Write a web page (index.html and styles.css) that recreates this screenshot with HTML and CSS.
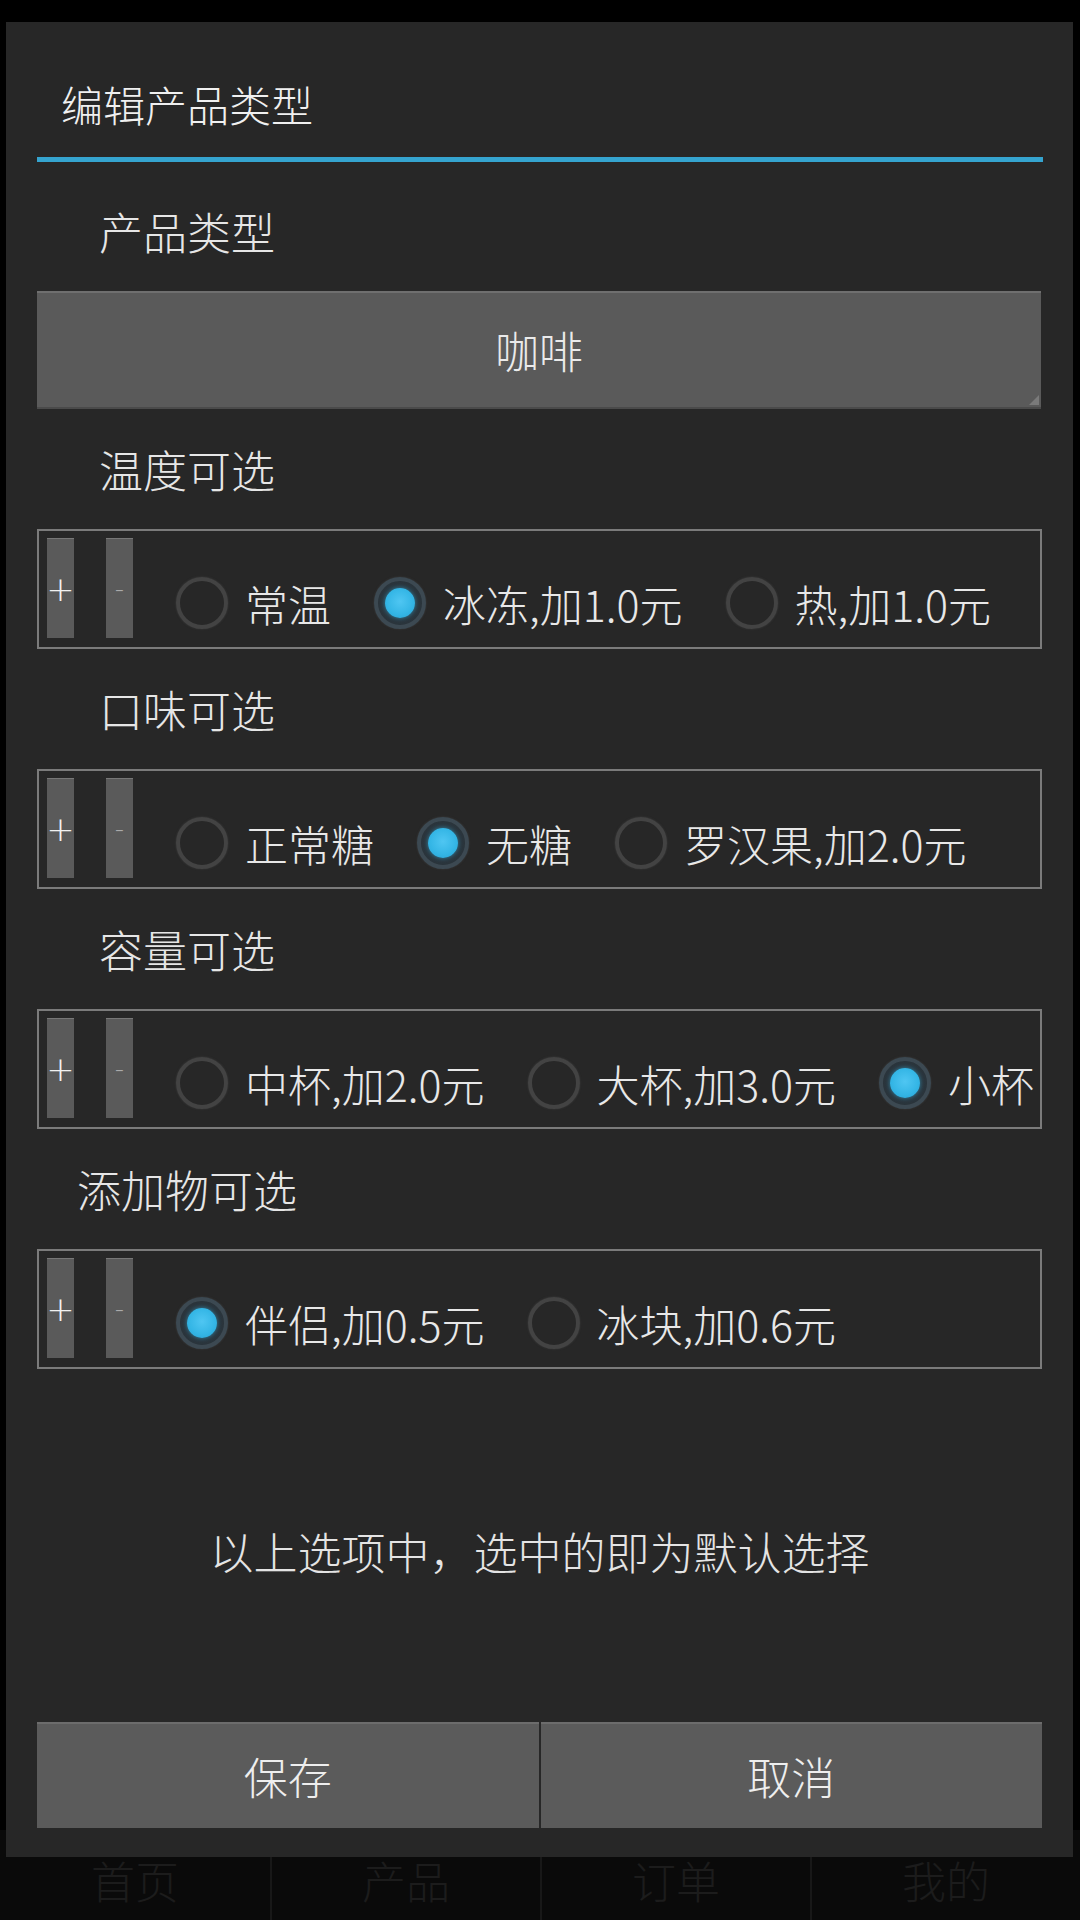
FILE: index.html
```html
<!DOCTYPE html>
<html lang="zh-CN">
<head>
<meta charset="utf-8">
<title>编辑产品类型</title>
<link rel="stylesheet" href="styles.css">
</head>
<body>
<div class="app">
  <div class="app-main"></div>
  <nav class="tabbar">
    <div class="tab">首页</div>
    <div class="tab">产品</div>
    <div class="tab">订单</div>
    <div class="tab">我的</div>
  </nav>
</div>

<div class="dialog">
  <div class="dialog-title">编辑产品类型</div>
  <div class="title-line"></div>

  <div class="dialog-body">
    <div class="label">产品类型</div>
    <div class="spinner"><span>咖啡</span><span class="spinner-corner"></span></div>

    <div class="label">温度可选</div>
    <div class="optbox">
      <div class="step">+</div>
      <div class="step step-minus">-</div>
      <div class="radios">
        <div class="radio"><span class="dot"></span><span class="rtext">常温</span></div>
        <div class="radio checked"><span class="dot"></span><span class="rtext">冰冻,加1.0元</span></div>
        <div class="radio"><span class="dot"></span><span class="rtext">热,加1.0元</span></div>
      </div>
    </div>

    <div class="label">口味可选</div>
    <div class="optbox">
      <div class="step">+</div>
      <div class="step step-minus">-</div>
      <div class="radios">
        <div class="radio"><span class="dot"></span><span class="rtext">正常糖</span></div>
        <div class="radio checked"><span class="dot"></span><span class="rtext">无糖</span></div>
        <div class="radio"><span class="dot"></span><span class="rtext">罗汉果,加2.0元</span></div>
      </div>
    </div>

    <div class="label">容量可选</div>
    <div class="optbox">
      <div class="step">+</div>
      <div class="step step-minus">-</div>
      <div class="radios">
        <div class="radio"><span class="dot"></span><span class="rtext">中杯,加2.0元</span></div>
        <div class="radio"><span class="dot"></span><span class="rtext">大杯,加3.0元</span></div>
        <div class="radio checked"><span class="dot"></span><span class="rtext">小杯</span></div>
      </div>
    </div>

    <div class="label">添加物可选</div>
    <div class="optbox">
      <div class="step">+</div>
      <div class="step step-minus">-</div>
      <div class="radios">
        <div class="radio checked"><span class="dot"></span><span class="rtext">伴侣,加0.5元</span></div>
        <div class="radio"><span class="dot"></span><span class="rtext">冰块,加0.6元</span></div>
      </div>
    </div>

    <div class="notice">以上选项中，选中的即为默认选择</div>
  </div>

  <div class="actions">
    <div class="btn">保存</div>
    <div class="btn">取消</div>
  </div>
</div>
</body>
</html>
```

FILE: styles.css
```css
* { box-sizing: border-box; }

html, body {
  margin: 0;
  padding: 0;
}

body {
  width: 1080px;
  height: 1920px;
  position: relative;
  overflow: hidden;
  background: #000;
  font-family: "Noto Sans CJK SC", "Noto Sans", sans-serif;
  font-weight: 300;
  color: #e8e8e8;
}

/* underlying app (dimmed) */
.app {
  height: 1920px;
  display: flex;
  flex-direction: column;
}

.app-main {
  flex: 1;
  background: #000;
}

.tabbar {
  height: 90px;
  background: #0a0a0a;
  display: grid;
  grid-template-columns: repeat(4, 1fr);
}

.tab {
  display: flex;
  align-items: center;
  justify-content: center;
  padding-top: 10px;
  font-size: 44px;
  font-weight: 200;
  color: #1c1c1c;
  border-left: 2px solid #181818;
}

.tab:first-child { border-left: none; }

/* dialog overlay */
.dialog {
  position: absolute;
  left: 6px;
  top: 22px;
  width: 1067px;
  height: 1835px;
  background: #272727;
  display: flex;
  flex-direction: column;
}

.dialog-title {
  padding: 57px 0 0 55px;
  font-size: 42px;
  line-height: 50px;
  color: #f0f0f0;
}

.title-line {
  margin: 28px 30px 0 31px;
  height: 5px;
  background: #35a4cf;
}

.dialog-body {
  padding: 9px 31px 0 31px;
  display: flex;
  flex-direction: column;
}

.label {
  width: 300px;
  height: 120px;
  line-height: 120px;
  text-align: center;
  font-size: 44px;
  color: #e6e6e6;
}

.spinner {
  position: relative;
  height: 118px;
  background: #5a5a5a;
  border-top: 2px solid #6f6f6f;
  border-bottom: 2px solid #4a4a4a;
  margin-right: 1px;
  display: flex;
  align-items: center;
  justify-content: center;
  font-size: 44px;
  color: #eaeaea;
}

.spinner-corner {
  position: absolute;
  right: 2px;
  bottom: 2px;
  width: 0;
  height: 0;
  border-style: solid;
  border-width: 0 0 10px 10px;
  border-color: transparent transparent #7a7a7a transparent;
}

.optbox {
  height: 120px;
  border: 2px solid #7b7b7b;
  display: flex;
  align-items: flex-start;
  padding: 7px 0 0 8px;
  overflow: hidden;
  white-space: nowrap;
}

.step {
  flex: none;
  width: 27px;
  height: 100px;
  background: #5a5a5a;
  border-top: 1px solid #777;
  display: flex;
  align-items: center;
  justify-content: center;
  font-size: 34px;
  color: #f2f2f2;
  font-family: "DejaVu Sans", sans-serif;
  font-weight: 300;
}

.step-minus {
  margin-left: 32px;
  color: #aaa;
  font-size: 26px;
}

.radios {
  display: flex;
  gap: 43px;
  margin: 39px 0 0 43px;
}

.radio {
  display: flex;
  align-items: center;
  gap: 17px;
  height: 52px;
  flex: none;
}

.dot {
  position: relative;
  flex: none;
  width: 52px;
  height: 52px;
  border-radius: 50%;
  border: 4px solid #434343;
  box-shadow: 0 0 2px rgba(90, 90, 90, 0.5);
}

.radio.checked .dot {
  border-color: #3c4952;
  background: radial-gradient(circle, #2f4350 0%, #2a343b 70%);
}

.radio.checked .dot::after {
  content: "";
  position: absolute;
  left: 7px;
  top: 7px;
  width: 30px;
  height: 30px;
  border-radius: 50%;
  background: radial-gradient(circle at 50% 45%, #4fc6f2 0%, #33b5e5 60%, #2a9fd0 100%);
  box-shadow: 0 0 4px rgba(51, 181, 229, 0.6);
}

.rtext {
  font-size: 43px;
  line-height: 52px;
  color: #e8e8e8;
}

.notice {
  margin-top: 152px;
  line-height: 60px;
  text-align: center;
  font-size: 44px;
  color: #e4e4e4;
}

.actions {
  margin-top: auto;
  padding: 0 31px 29px 31px;
  display: flex;
  gap: 2px;
}

.btn {
  flex: 1;
  height: 106px;
  background: #5b5b5b;
  border-top: 2px solid #6c6c6c;
  display: flex;
  align-items: center;
  justify-content: center;
  font-size: 44px;
  color: #eeeeee;
}
```
